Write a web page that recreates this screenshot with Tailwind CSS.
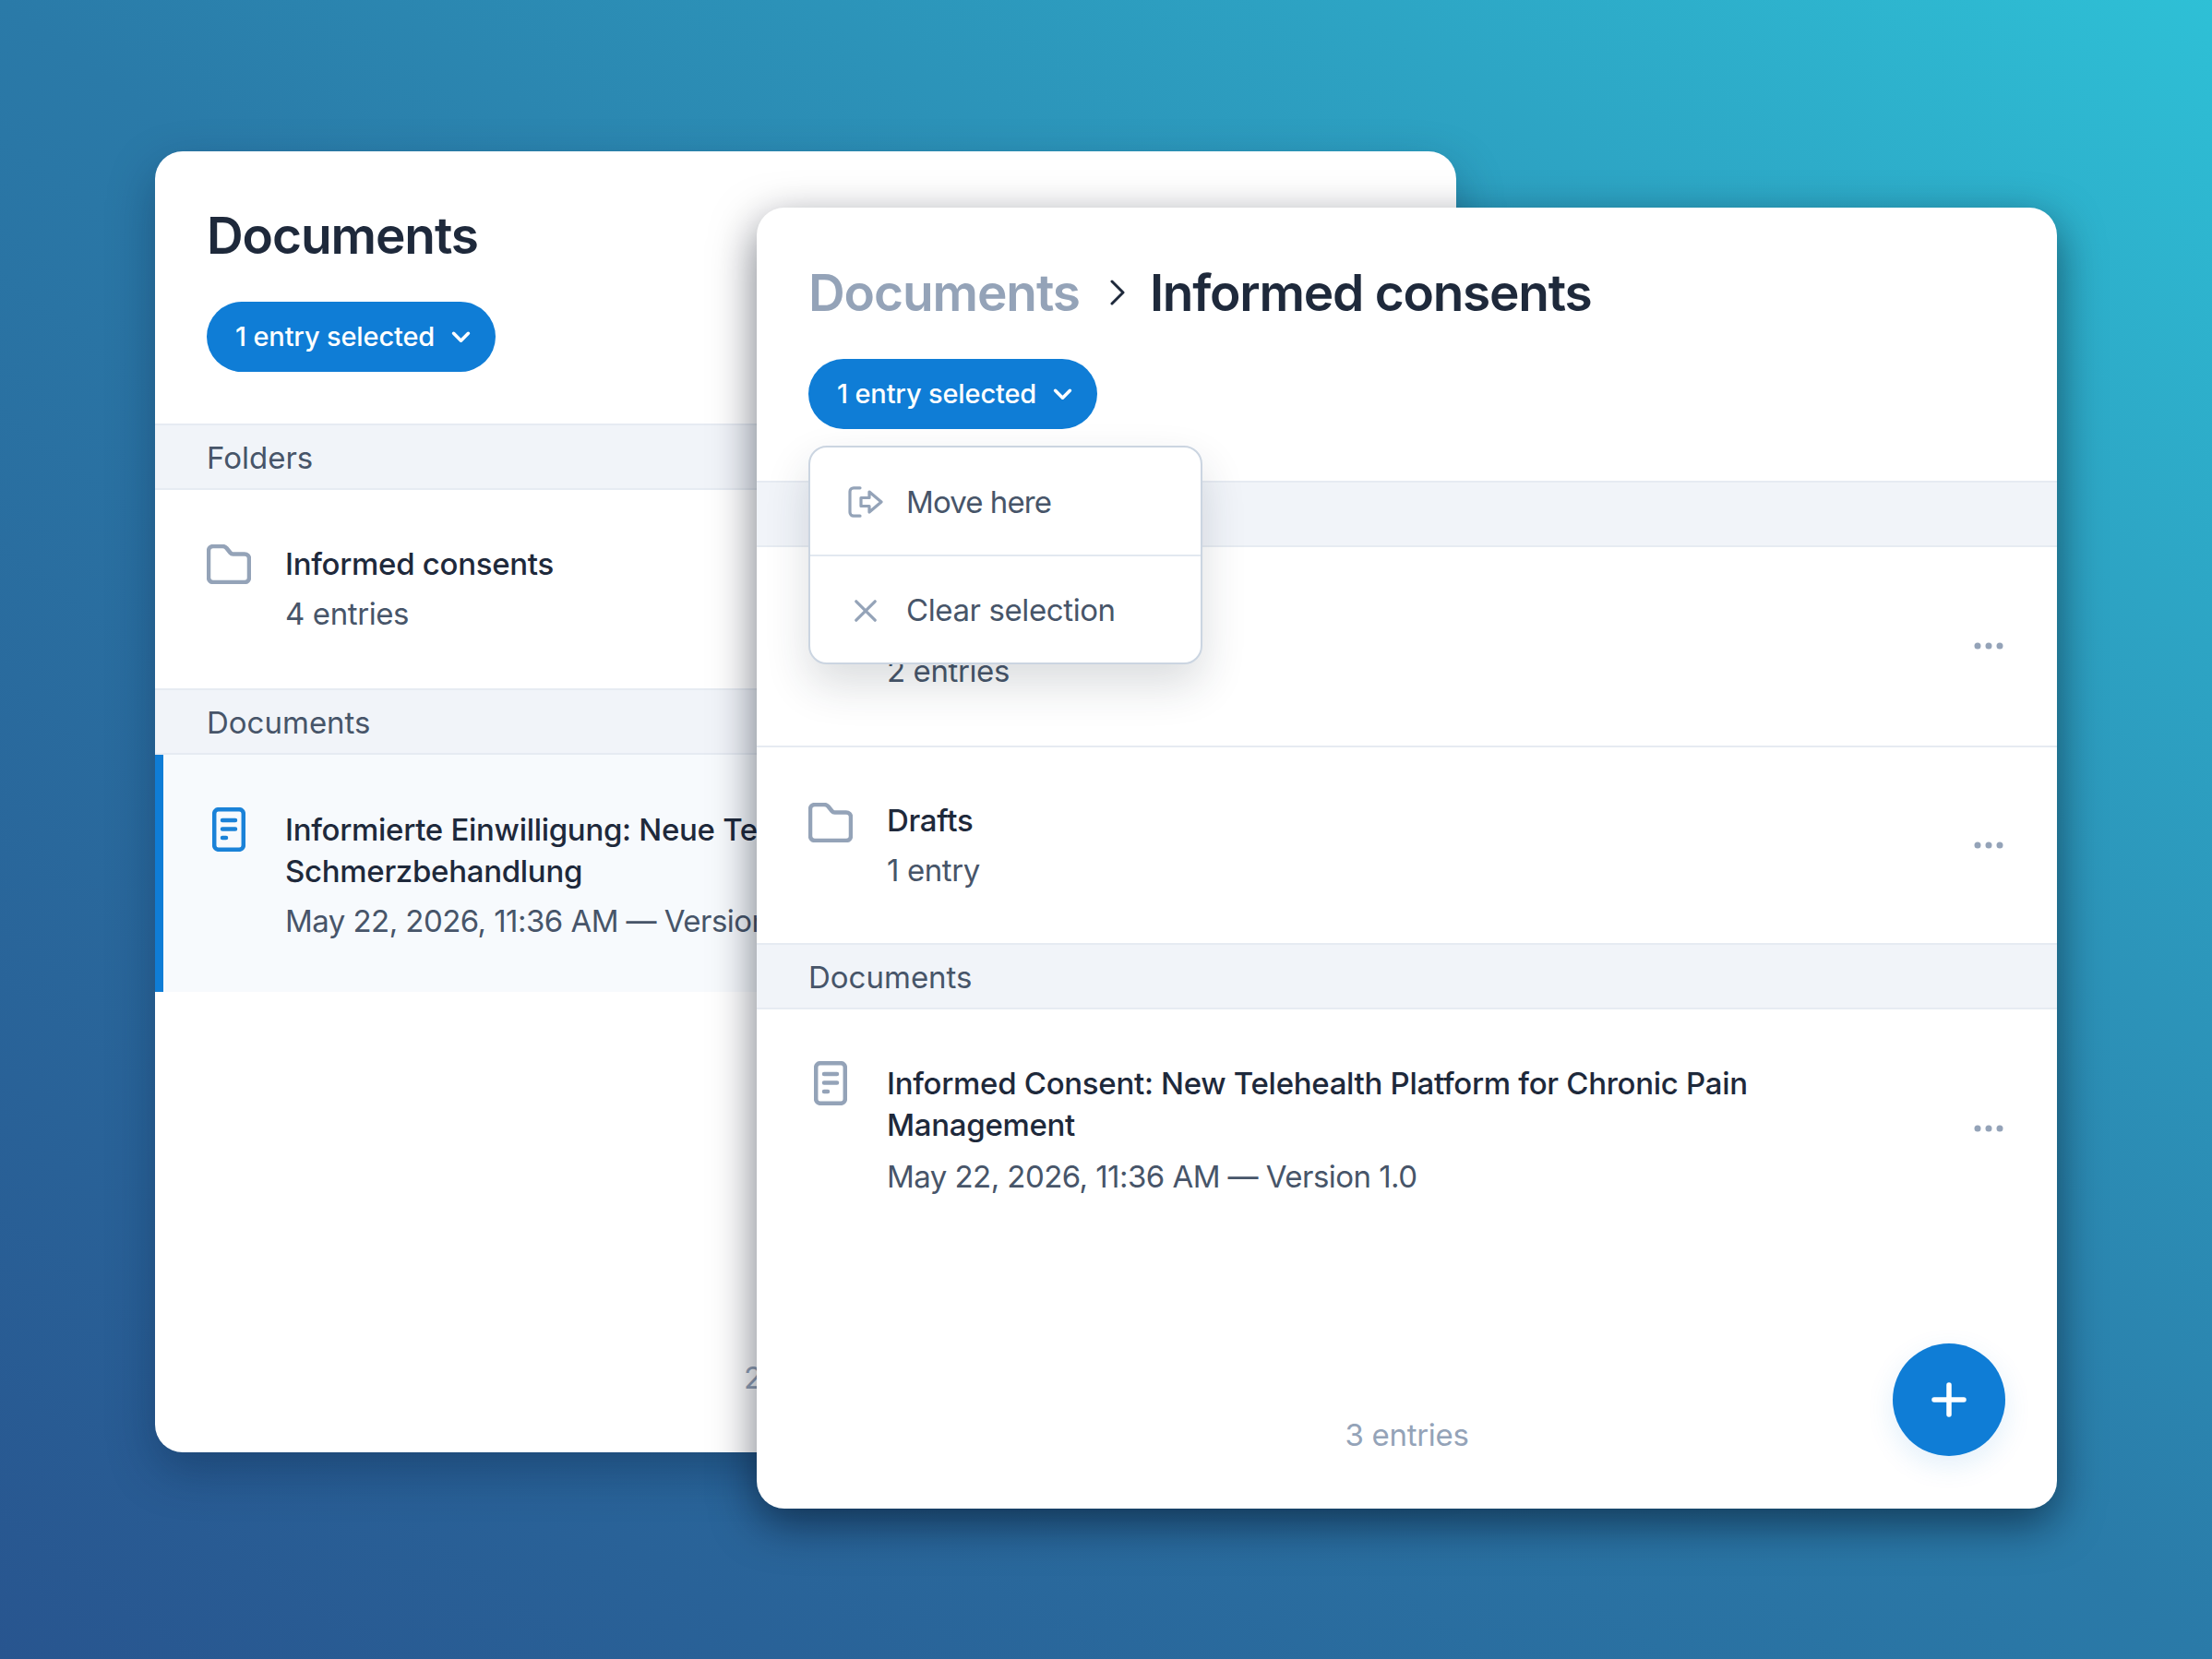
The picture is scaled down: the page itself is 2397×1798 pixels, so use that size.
<!doctype html>
<html lang="en">
  <head>
    <meta charset="UTF-8" />
    <title>Documents</title>
    <script src="https://cdn.jsdelivr.net/npm/@tailwindcss/browser@4"></script>
  </head>
  <body class="font-['Inter',sans-serif]">
    <main class="relative h-[1798px] w-[2397px] overflow-hidden bg-linear-to-tr from-[#28558f] via-[#2a7aa8] to-[#2ec0d6]">
      <!-- back window -->
      <section class="absolute left-[168px] top-[164px] flex h-[1410px] w-[1410px] flex-col rounded-[30px] bg-white shadow-[0_20px_50px_rgba(8,30,60,0.35)]">
        <header class="h-[295px] px-[56px] pt-[58px]">
          <h1 class="h-[66px] text-[55px] leading-[66px] font-semibold tracking-[-1.1px] text-[#1e293b]">Documents</h1>
          <button class="mt-[39px] flex h-[76px] w-[313px] items-center rounded-full bg-[#0f7dd6] pl-[31px] text-[29px] font-medium tracking-[-0.15px] text-white">
            1 entry selected
            <svg class="ml-[18px] h-[13px] w-[21px]" viewBox="0 0 22 14" fill="none" stroke="currentColor" stroke-width="3.800" stroke-linecap="round" stroke-linejoin="round"><path d="M2.500 2.500 11 11l8.500-8.500" /></svg>
          </button>
        </header>
        <div class="flex h-[72px] items-center border-y-2 border-[#e6ebf2] bg-[#f1f4f9] pl-[56px] pt-[3px] text-[33px] text-[#475569]">Folders</div>
        <div class="flex h-[215px] items-start pl-[56px] pt-[58px]">
          <svg class="mt-[1px] h-[43px] w-[48px] shrink-0" viewBox="0 0 48 43" fill="none" stroke="#94a3b8" stroke-width="4.500" stroke-linejoin="round"><path d="M2 7a5 5 0 0 1 5-5h10c2 0 3.300.7 4.500 2l4 5c.8 1 1.700 1.500 3 1.500H41a5 5 0 0 1 5 5V36a5 5 0 0 1-5 5H7a5 5 0 0 1-5-5z" /></svg>
          <div class="ml-[37px]">
            <h3 class="text-[33px] leading-[45px] font-[450] tracking-[-0.3px] text-[#1e293b]">Informed consents</h3>
            <p class="mt-[9px] text-[33px] leading-[45px] tracking-[-0.4px] text-[#475569]">4 entries</p>
          </div>
        </div>
        <div class="flex h-[72px] items-center border-y-2 border-[#e6ebf2] bg-[#f1f4f9] pl-[56px] pt-[3px] text-[33px] text-[#475569]">Documents</div>
        <div class="flex h-[257px] items-start border-l-[9px] border-[#0f7dd6] bg-[#f7fafd] pl-[53px] pt-[57px]">
          <svg class="h-[48px] w-[36px] shrink-0" viewBox="0 0 36 48" fill="none" stroke="#1a82d8" stroke-width="4.500" stroke-linecap="round"><rect x="2.200" y="2.200" width="31.600" height="43.600" rx="4.500" /><path d="M11 14h14M11 23.500h14M11 33h4" /></svg>
          <div class="ml-[43px] w-[1200px] pt-[2px]">
            <h3 class="text-[33px] leading-[45px] font-[450] tracking-[-0.3px] text-[#1e293b]">Informierte Einwilligung: Neue Telehealth-Plattform zur chronischen<br />Schmerzbehandlung</h3>
            <p class="mt-[9px] text-[33px] leading-[45px] tracking-[-0.55px] text-[#475569]">May 22, 2026, 11:36 AM — Version 1.0</p>
          </div>
        </div>
        <p class="mt-auto pb-[58px] text-center text-[33px] leading-[45px] tracking-[-0.3px] text-[#94a3b8]">2 entries</p>
      </section>

      <!-- front window -->
      <section class="absolute left-[820px] top-[225px] flex h-[1410px] w-[1409px] flex-col rounded-[30px] bg-white shadow-[0_16px_48px_rgba(0,10,25,0.55)]">
        <header class="h-[296px] px-[56px] pt-[59px]">
          <div class="flex h-[66px] items-center text-[55px] leading-[66px] font-semibold tracking-[-1.1px]">
            <h1 class="text-[#94a3b8]">Documents</h1>
            <svg class="ml-[33px] mr-[27px] h-[28px] w-[16px]" viewBox="0 0 16 28" fill="none" stroke="#1e293b" stroke-width="3" stroke-linecap="round" stroke-linejoin="round"><path d="M2 2l12 12L2 26" /></svg>
            <h1 class="tracking-[-1.25px] text-[#1e293b]">Informed consents</h1>
          </div>
          <button class="mt-[39px] flex h-[76px] w-[313px] items-center rounded-full bg-[#0f7dd6] pl-[31px] text-[29px] font-medium tracking-[-0.15px] text-white">
            1 entry selected
            <svg class="ml-[18px] h-[13px] w-[21px]" viewBox="0 0 22 14" fill="none" stroke="currentColor" stroke-width="3.800" stroke-linecap="round" stroke-linejoin="round"><path d="M2.500 2.500 11 11l8.500-8.500" /></svg>
          </button>
        </header>
        <div class="h-[72px] border-y-2 border-[#e6ebf2] bg-[#f1f4f9]"></div>
        <div class="flex h-[217px] items-center justify-between border-b-2 border-[#e6ebf2] pl-[56px] pr-[57px]">
          <div class="ml-[85px]">
            <h3 class="text-[33px] leading-[45px] font-[450] text-[#1e293b]">&nbsp;</h3>
            <p class="mt-[9px] text-[33px] leading-[45px] tracking-[-0.4px] text-[#475569]">2 entries</p>
          </div>
          <svg class="mb-[2px] h-[10px] w-[34px]" viewBox="0 0 34 10" fill="#94a3b8"><circle cx="5" cy="5" r="3.500" /><circle cx="17" cy="5" r="3.500" /><circle cx="29" cy="5" r="3.500" /></svg>
        </div>
        <div class="flex h-[212px] items-center justify-between pl-[56px] pr-[57px]">
          <div class="flex items-start">
            <svg class="mt-[3px] h-[43px] w-[48px] shrink-0" viewBox="0 0 48 43" fill="none" stroke="#94a3b8" stroke-width="4.500" stroke-linejoin="round"><path d="M2 7a5 5 0 0 1 5-5h10c2 0 3.300.7 4.500 2l4 5c.8 1 1.700 1.500 3 1.500H41a5 5 0 0 1 5 5V36a5 5 0 0 1-5 5H7a5 5 0 0 1-5-5z" /></svg>
            <div class="ml-[37px]">
              <h3 class="text-[33px] leading-[45px] font-[450] tracking-[-0.3px] text-[#1e293b]">Drafts</h3>
              <p class="mt-[9px] text-[33px] leading-[45px] tracking-[-0.4px] text-[#475569]">1 entry</p>
            </div>
          </div>
          <svg class="h-[10px] w-[34px]" viewBox="0 0 34 10" fill="#94a3b8"><circle cx="5" cy="5" r="3.500" /><circle cx="17" cy="5" r="3.500" /><circle cx="29" cy="5" r="3.500" /></svg>
        </div>
        <div class="flex h-[72px] items-center border-y-2 border-[#e6ebf2] bg-[#f1f4f9] pl-[56px] pt-[3px] text-[33px] text-[#475569]">Documents</div>
        <div class="flex h-[257px] items-center justify-between pl-[56px] pr-[57px]">
          <div class="flex items-start">
            <svg class="ml-[6px] mt-[2px] h-[48px] w-[36px] shrink-0" viewBox="0 0 36 48" fill="none" stroke="#94a3b8" stroke-width="4.500" stroke-linecap="round"><rect x="2.200" y="2.200" width="31.600" height="43.600" rx="4.500" /><path d="M11 14h14M11 23.500h14M11 33h4" /></svg>
            <div class="ml-[43px] w-[1000px] pt-[4px]">
              <h3 class="text-[33px] leading-[45px] font-[450] tracking-[-0.3px] text-[#1e293b]">Informed Consent: New Telehealth Platform for Chronic Pain Management</h3>
              <p class="mt-[11px] text-[33px] leading-[45px] tracking-[-0.55px] text-[#475569]">May 22, 2026, 11:36 AM — Version 1.0</p>
            </div>
          </div>
          <svg class="h-[10px] w-[34px]" viewBox="0 0 34 10" fill="#94a3b8"><circle cx="5" cy="5" r="3.500" /><circle cx="17" cy="5" r="3.500" /><circle cx="29" cy="5" r="3.500" /></svg>
        </div>
        <p class="mt-auto pb-[57px] text-center text-[33px] leading-[45px] tracking-[-0.3px] text-[#94a3b8]">3 entries</p>

        <!-- selection menu -->
        <div class="absolute left-[56px] top-[258px] flex h-[237px] w-[427px] flex-col divide-y-2 divide-[#e2e8f0] rounded-[20px] border-[2.500px] border-[#cbd5e1] bg-white text-[33px] tracking-[-0.4px] text-[#475569] shadow-[0_22px_48px_rgba(30,41,59,0.16)]">
          <div class="flex flex-1 items-center pl-[41px] pt-[3px]">
            <svg class="h-[34px] w-[38px] shrink-0" viewBox="0 0 38 34" fill="none" stroke="#94a3b8" stroke-width="3.200" stroke-linecap="round" stroke-linejoin="round"><path d="M13 1.800H6a4 4 0 0 0-4 4v22.400a4 4 0 0 0 4 4h7" /><path d="M14 12.500h9V6l13 11-13 11v-6.500h-9z" /></svg>
            <span class="ml-[25px] tracking-[-0.9px]">Move here</span>
          </div>
          <div class="flex flex-1 items-center pl-[48px] pt-[3px]">
            <svg class="h-[24px] w-[24px] shrink-0" viewBox="0 0 24 24" fill="none" stroke="#94a3b8" stroke-width="3.200" stroke-linecap="round"><path d="M1.800 1.800l20.400 20.400M22.200 1.800 1.800 22.200" /></svg>
            <span class="ml-[32px]">Clear selection</span>
          </div>
        </div>

        <button class="absolute bottom-[57px] right-[56px] flex h-[122px] w-[122px] items-center justify-center rounded-full bg-[#0f7dd6] shadow-[0_10px_30px_rgba(15,125,214,0.12)]">
          <svg class="h-[38px] w-[38px]" viewBox="0 0 38 38" fill="none" stroke="white" stroke-width="5.500" stroke-linecap="round"><path d="M19 3v32M3 19h32" /></svg>
        </button>
      </section>
    </main>
  </body>
</html>
